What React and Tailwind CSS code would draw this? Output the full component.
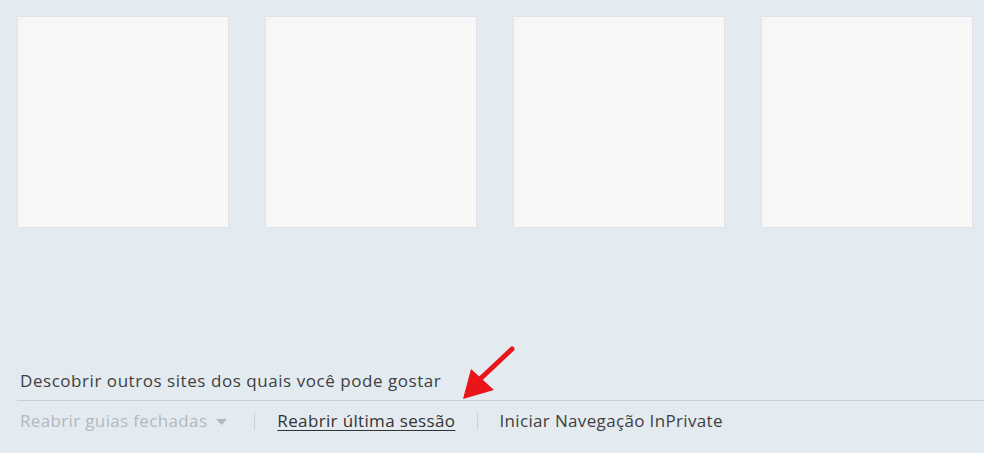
import React from "react";

function Tile() {
  return <div className="w-[212px] h-[212px] bg-[#f7f7f7] border border-[#dfe3e7] shrink-0" />;
}

export default function App() {
  return (
    <div
      className="relative w-[984px] h-[453px] bg-[#e3ebf1] flex flex-col overflow-hidden"
      style={{ fontFamily: '"Open Sans", "Noto Sans", sans-serif' }}
    >
      <div className="flex gap-[36px] pl-[17px] pt-[16px]">
        <Tile />
        <Tile />
        <Tile />
        <Tile />
      </div>
      <div className="flex-1" />
      <div className="pl-[20px] text-[17px] leading-[22px] tracking-[0.55px] text-[#404040] pb-[8px]">
        Descobrir outros sites dos quais você pode gostar
      </div>
      <div className="ml-[17px] border-t border-[#c9cdd1]" />
      <div className="flex items-center pl-[20px] h-[40px] mb-[12px] text-[17px] leading-[22px] tracking-[0.35px]">
        <span className="text-[#b3b8bd]">Reabrir guias fechadas</span>
        <svg className="ml-[9px] mt-[1px]" width="11" height="6" viewBox="0 0 11 6">
          <path d="M0 0 L11 0 L5.5 6 Z" fill="#b3b8bd" />
        </svg>
        <span className="ml-[27px] mr-[22px] w-px h-[17px] bg-[#ccd0d4]" />
        <span className="text-[#333] underline underline-offset-[3px]">Reabrir última sessão</span>
        <span className="ml-[22px] mr-[21px] w-px h-[17px] bg-[#ccd0d4]" />
        <span className="text-[#404040]">Iniciar Navegação InPrivate</span>
      </div>
      <svg className="absolute left-0 top-0 pointer-events-none" width="984" height="453">
        <line x1="512" y1="349" x2="478" y2="381" stroke="#e8161b" strokeWidth="5" strokeLinecap="round" />
        <polygon points="463,399 471,369 494,390" fill="#e8161b" />
      </svg>
    </div>
  );
}
